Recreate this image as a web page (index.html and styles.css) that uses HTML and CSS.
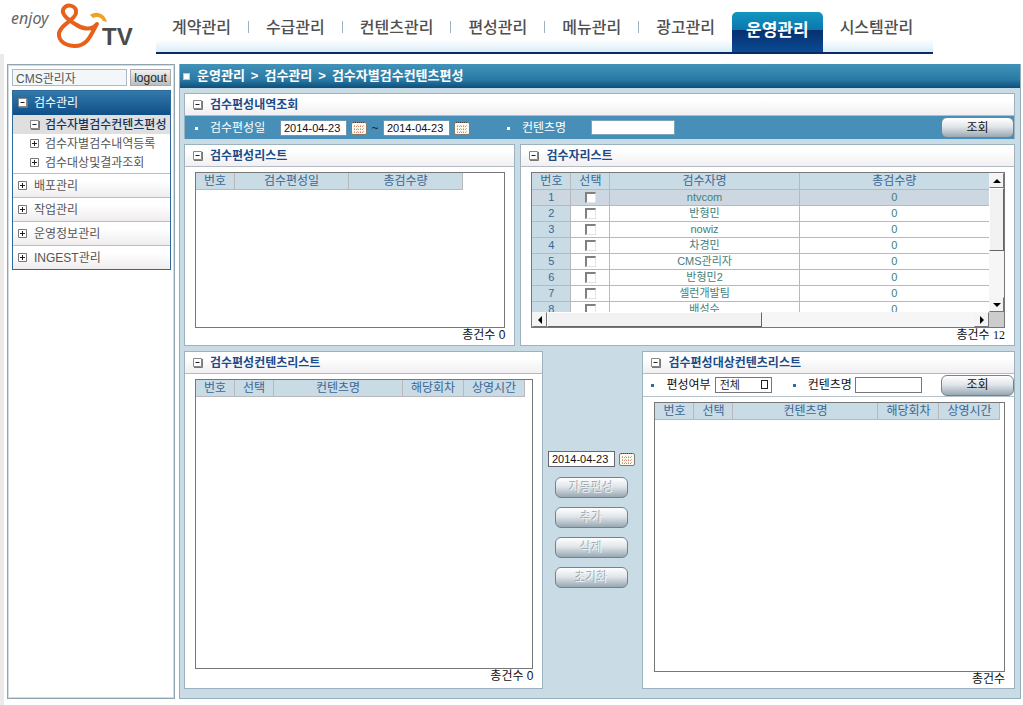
FILE: index.html
```html
<!DOCTYPE html>
<html lang="ko">
<head>
<meta charset="utf-8">
<meta name="viewport" content="width=device-width, initial-scale=1">
<title>검수자별검수컨텐츠편성</title>
<link rel="stylesheet" href="styles.css">
</head>
<body>
<svg class="defs" width="0" height="0" aria-hidden="true">
  <symbol id="i-minus" viewBox="0 0 10 10"><path d="M.5 .5h8v8h-8z" fill="#fff" stroke="#888"/><path d="M9.500 1v8.500H1" fill="none" stroke="#777"/><path d="M2.500 4.500h4" stroke="#222"/></symbol>
  <symbol id="i-plus" viewBox="0 0 10 10"><path d="M.5 .5h8v8h-8z" fill="#fff" stroke="#777"/><path d="M2 4.500h5M4.500 2v5" stroke="#222"/></symbol>
  <symbol id="i-cal" viewBox="0 0 16 14"><rect x=".5" y="1.500" width="15" height="12" rx="1.500" fill="#fdf8ef" stroke="#817b76"/><path d="M2 1.500h12" stroke="#444" stroke-dasharray="1 1"/><path d="M3 5.500h10M3 8.500h10M3 11.500h10" stroke="#d58a6c" stroke-dasharray="1 1"/><path d="M3 4.500h10M3 7.500h10M3 10.500h10" stroke="#b9c3a4" stroke-dasharray="1 2"/></symbol>
</svg>

<header class="top">
  <svg class="logo" viewBox="0 0 156 54" role="img" aria-label="enjoy &amp; TV">
    <text class="logo-enjoy" x="11" y="24">enjoy</text>
    <path d="M97 24C92 31 82 29 75 24C67 19 60 13 64 8C68 3 77 6 76 13C75 20 61 24 59 33C58 42 67 46 75 46C88 46 91 34 97 24Z" fill="none" stroke="#e8611c" stroke-width="4" stroke-linejoin="round"/>
    <path d="M90 15C97 10 105 14 107 22L103 21C101 17 97 16 93 18Z" fill="#f2a11f"/>
    <text class="logo-tv" x="102" y="45">TV</text>
  </svg>
  <nav class="gnb">
    <a href="#">계약관리</a><a href="#">수급관리</a><a href="#">컨텐츠관리</a><a href="#">편성관리</a><a href="#">메뉴관리</a><a href="#">광고관리</a><a href="#" class="on" aria-current="page">운영관리</a><a href="#">시스템관리</a>
  </nav>
</header>

<div class="page">
  <aside class="side">
    <form class="login">
      <input type="text" value="CMS관리자" aria-label="사용자" readonly>
      <button type="button">logout</button>
    </form>
    <nav class="menu">
      <a href="#" class="menu-head"><svg class="box"><use href="#i-minus"/></svg>검수관리</a>
      <div class="sub">
        <a href="#" class="cur"><svg class="box"><use href="#i-minus"/></svg>검수자별검수컨텐츠편성</a>
        <a href="#"><svg class="box"><use href="#i-plus"/></svg>검수자별검수내역등록</a>
        <a href="#"><svg class="box"><use href="#i-plus"/></svg>검수대상및결과조회</a>
      </div>
      <a href="#" class="item"><svg class="box"><use href="#i-plus"/></svg>배포관리</a>
      <a href="#" class="item"><svg class="box"><use href="#i-plus"/></svg>작업관리</a>
      <a href="#" class="item"><svg class="box"><use href="#i-plus"/></svg>운영정보관리</a>
      <a href="#" class="item"><svg class="box"><use href="#i-plus"/></svg>INGEST관리</a>
    </nav>
  </aside>

  <main class="main">
    <h1 class="crumb">운영관리<span class="sep">&gt;</span>검수관리<span class="sep">&gt;</span>검수자별검수컨텐츠편성</h1>
    <div class="work">
      <section class="panel search">
        <h2><svg class="box"><use href="#i-minus"/></svg>검수편성내역조회</h2>
        <form class="filter">
          <label for="from">검수편성일</label>
          <input id="from" class="date" type="text" value="2014-04-23">
          <button type="button" class="cal" aria-label="시작일 선택"><svg><use href="#i-cal"/></svg></button>
          <span class="tilde">~</span>
          <input class="date" type="text" value="2014-04-23" aria-label="종료일">
          <button type="button" class="cal" aria-label="종료일 선택"><svg><use href="#i-cal"/></svg></button>
          <label for="content" class="second">컨텐츠명</label>
          <input id="content" class="wide" type="text">
          <button type="button" class="btn">조회</button>
        </form>
      </section>

      <div class="row upper">
        <section class="panel">
          <h2><svg class="box"><use href="#i-minus"/></svg>검수편성리스트</h2>
          <div class="body">
            <div class="grid">
              <table class="fit">
                <thead><tr><th class="c-no">번호</th><th class="c-mid">검수편성일</th><th class="c-mid">총검수량</th></tr></thead>
              </table>
            </div>
            <p class="count">총건수 0</p>
          </div>
        </section>
        <section class="panel">
          <h2><svg class="box"><use href="#i-minus"/></svg>검수자리스트</h2>
          <div class="body">
            <div class="grid scroller">
              <div class="view">
                <table class="full">
                  <thead><tr><th class="c-no">번호</th><th class="c-no">선택</th><th>검수자명</th><th>총검수량</th></tr></thead>
                  <tbody>
                    <tr class="sel"><td class="no">1</td><td><input type="checkbox" aria-label="ntvcom"></td><td>ntvcom</td><td>0</td></tr>
                    <tr><td class="no">2</td><td><input type="checkbox" aria-label="반형민"></td><td>반형민</td><td>0</td></tr>
                    <tr><td class="no">3</td><td><input type="checkbox" aria-label="nowiz"></td><td>nowiz</td><td>0</td></tr>
                    <tr><td class="no">4</td><td><input type="checkbox" aria-label="차경민"></td><td>차경민</td><td>0</td></tr>
                    <tr><td class="no">5</td><td><input type="checkbox" aria-label="CMS관리자"></td><td>CMS관리자</td><td>0</td></tr>
                    <tr><td class="no">6</td><td><input type="checkbox" aria-label="반형민2"></td><td>반형민2</td><td>0</td></tr>
                    <tr><td class="no">7</td><td><input type="checkbox" aria-label="셀런개발팀"></td><td>셀런개발팀</td><td>0</td></tr>
                    <tr><td class="no">8</td><td><input type="checkbox" aria-label="배성수"></td><td>배성수</td><td>0</td></tr>
                  </tbody>
                </table>
              </div>
              <div class="vbar"><button type="button" aria-label="위로"><svg viewBox="0 0 8 8"><path d="M4 2l4 4H0z"/></svg></button><span class="thumb"></span><span class="track"></span><button type="button" aria-label="아래로"><svg viewBox="0 0 8 8"><path d="M4 6l4-4H0z"/></svg></button></div>
              <div class="hbar"><button type="button" aria-label="왼쪽"><svg viewBox="0 0 8 8"><path d="M2 4l4-4v8z"/></svg></button><span class="thumb"></span><span class="track"></span><button type="button" aria-label="오른쪽"><svg viewBox="0 0 8 8"><path d="M6 4L2 0v8z"/></svg></button></div>
              <span class="corner"></span>
            </div>
            <p class="count">총건수 <span class="num">12</span></p>
          </div>
        </section>
      </div>

      <div class="row lower">
        <section class="panel">
          <h2><svg class="box"><use href="#i-minus"/></svg>검수편성컨텐츠리스트</h2>
          <div class="body">
            <div class="grid">
              <table class="fit">
                <thead><tr><th class="c-no">번호</th><th class="c-no">선택</th><th class="c-name">컨텐츠명</th><th class="c-time">해당회차</th><th class="c-time">상영시간</th></tr></thead>
              </table>
            </div>
            <p class="count">총건수 0</p>
          </div>
        </section>
        <div class="actions">
          <div class="pick">
            <input class="date" type="text" value="2014-04-23" aria-label="편성일">
            <button type="button" class="cal" aria-label="편성일 선택"><svg><use href="#i-cal"/></svg></button>
          </div>
          <button type="button" class="btn" disabled>자동편성</button>
          <button type="button" class="btn" disabled>추가</button>
          <button type="button" class="btn" disabled>삭제</button>
          <button type="button" class="btn" disabled>초기화</button>
        </div>
        <section class="panel target">
          <h2><svg class="box"><use href="#i-minus"/></svg>검수편성대상컨텐츠리스트</h2>
          <form class="tools">
            <label for="state">편성여부</label>
            <span class="pickbox"><select id="state"><option>전체</option></select></span>
            <label for="target" class="second">컨텐츠명</label>
            <input id="target" type="text">
            <button type="button" class="btn">조회</button>
          </form>
          <div class="body">
            <div class="grid">
              <table class="fit">
                <thead><tr><th class="c-no">번호</th><th class="c-no">선택</th><th class="c-target">컨텐츠명</th><th class="c-time">해당회차</th><th class="c-time">상영시간</th></tr></thead>
              </table>
            </div>
            <p class="count">총건수</p>
          </div>
        </section>
      </div>
    </div>
  </main>
</div>
</body>
</html>
```
FILE: styles.css
```css
*, ::before, ::after { box-sizing: border-box; }

body {
  margin: 0;
  min-height: 100vh;
  display: flex;
  flex-direction: column;
  background: #fff;
  color: #111;
  font: 12px/16px "Liberation Sans", "Noto Sans CJK KR", sans-serif;
}

a { color: inherit; text-decoration: none; }
h1, h2, p { margin: 0; }
input, button, select { font: inherit; margin: 0; padding: 0; border-radius: 0; }
svg { display: block; flex: none; }
.defs { position: absolute; }
.box { width: 10px; height: 10px; }

/* Header */
.top { display: flex; height: 54px; }
.logo { width: 156px; height: 54px; }
.logo-enjoy { font: italic 16px "Noto Sans", sans-serif; fill: #666; }
.logo-tv { font: bold 24px "Liberation Sans", sans-serif; fill: #4a4a4a; }
.gnb {
  display: flex;
  align-items: center;
  padding-top: 3px;
  padding-right: 2px;
  border-bottom: 2px solid #0a2a66;
  background: linear-gradient(#fff 76%, #d9edf9);
}
.gnb a {
  position: relative;
  padding: 0 18px 0 17px;
  color: #505050;
  font-size: 16px;
  font-weight: 500;
  line-height: 24px;
  white-space: nowrap;
}
.gnb a:first-child { padding-left: 16px; }
.gnb a:nth-child(-n+6)::after {
  content: "";
  position: absolute;
  right: 0;
  top: 5px;
  width: 1px;
  height: 12px;
  background: #9fb0bf;
}
.gnb a:nth-child(6)::after { display: none; }
.gnb a:nth-child(6) { padding-right: 17px; }
.gnb .on {
  align-self: flex-end;
  padding: 0 14px;
  border-radius: 5px 5px 0 0;
  background: linear-gradient(#1495c0, #0b78ae 44%, #08306e 46%, #0a4a94);
  color: #fff;
  font-size: 17px;
  font-weight: bold;
  line-height: 38px;
  height: 40px;
}

/* Page frame */
.page {
  flex: 1;
  display: flex;
  gap: 4px;
  padding: 10px 2px 6px 3px;
  border-left: 4px solid #ece9e9;
}

.side { width: 168px; flex: none; padding: 4px 3px 4px 4px; border: 1px solid #8fa6b0; outline: 1px solid #d3dde0; outline-offset: -2px; }
.login { display: flex; gap: 3px; margin-bottom: 4px; }
.login input { flex: 1; min-width: 0; height: 17px; padding: 0 3px; border: 1px solid #a9bbc9; background: #f3f7fa; color: #555; }
.login button { width: 41px; height: 17px; border: 1px solid #aaa; background: linear-gradient(#f2f2f2, #bdbdbd); color: #222; line-height: 14px; }

.menu { border: 1px solid #2f6a9c; color: #555; }
.menu a { display: flex; align-items: center; white-space: nowrap; overflow: hidden; }
.menu .menu-head { gap: 6px; height: 24px; padding-left: 5px; background: linear-gradient(#3379ab, #0f4f88); color: #fff; }
.sub { padding-bottom: 1px; }
.sub a { gap: 5px; height: 19px; padding-left: 17px; }
.sub .cur { background: #dfdfe0; color: #14345c; font-weight: 500; }
.menu .item { gap: 6px; height: 24px; padding-left: 5px; border-top: 1px solid #bcbcbc; background: linear-gradient(#fff 30%, #efecee); }

.main { flex: 1; min-width: 0; display: flex; flex-direction: column; border: 1px solid #93afbc; border-top: 0; background: #c9dbe5; }
.crumb {
  display: flex;
  align-items: center;
  height: 24px;
  padding-left: 3px;
  background: linear-gradient(#4092b8, #2b7aa5 65%, #0c4f7a);
  color: #fff;
  font-size: 13px;
  font-weight: bold;
}
.crumb::before { content: ""; width: 7px; height: 7px; margin-right: 7px; border: 1px solid #a8cfe0; background: #fff; }
.sep { margin: 0 6px; }
.work { flex: 1; display: flex; flex-direction: column; gap: 5px; padding: 5px 5px 9px 4px; }

/* Panels */
.panel { display: flex; flex-direction: column; min-width: 0; border: 1px solid #9db2bf; background: #fff; }
.panel h2 {
  display: flex;
  align-items: center;
  gap: 7px;
  height: 22px;
  padding-left: 8px;
  border-bottom: 1px solid #b4bcc2;
  background: linear-gradient(#fff 30%, #f1eff1);
  color: #1c4b88;
  font-size: 12px;
  font-weight: bold;
}
.body { flex: 1; display: flex; flex-direction: column; padding: 5px 9px 3px 10px; }
.grid { flex: 1; border: 1px solid #777; background: #fff; }
.count { line-height: 14px; text-align: right; }
.num { font-family: "Liberation Serif", "Noto Sans CJK KR", serif; }
.row { display: grid; gap: 5px; }
.upper { grid-template-columns: 331fr 494fr; }
.lower { flex: 1; grid-template-columns: 359fr 99px 372fr; gap: 0; }
.lower .body { padding-bottom: 5px; }
.lower .target .body { padding: 5px 9px 2px 11px; }

/* Search bar */
.search { border-bottom: 0; }
.filter { display: flex; align-items: center; height: 23px; padding-left: 10px; background: #478fb8; color: #fff; }
.filter label::before, .tools label::before {
  content: "";
  display: inline-block;
  width: 3px;
  height: 3px;
  margin-right: 12px;
  vertical-align: middle;
  background: currentColor;
}
.filter label { width: 85px; }
.filter .second { width: 84px; margin-left: 37px; }
.date { width: 67px; height: 16px; padding: 0 3px; border: 1px solid #667; background: #fff; color: #111; font-size: 11px; }
.filter .date { border-color: #6d98b0; }
.cal { width: 16px; height: 14px; margin-left: 4px; border: 0; background: none; }
.cal svg { width: 16px; height: 14px; }
.tilde { width: 16px; color: #123; text-align: center; }
.wide { width: 84px; height: 15px; border: 1px solid #7ba5bb; background: #fff; }
.btn {
  width: 73px;
  height: 21px;
  border: 1px solid #6f8492;
  border-radius: 6px;
  background: linear-gradient(#fff, #e1e6ea 45%, #98a8b3);
  color: #111;
  line-height: 18px;
}
.filter .btn, .tools .btn { margin-left: auto; }

/* Tables */
table { border-collapse: separate; border-spacing: 0; table-layout: fixed; }
.fit { width: min-content; }
.full { width: 100%; }
th, td { height: 16px; padding: 0; border-right: 1px solid #b9b9bb; border-bottom: 1px solid #b9b9bb; line-height: 15px; text-align: center; overflow: hidden; white-space: nowrap; }
th { height: 17px; background: #c9dbe5; color: #3a6794; font-weight: normal; line-height: 16px; }
td { color: #44807a; font-size: 11px; }
.full th:last-child, .full td:last-child { border-right: 0; }
td.no { background: #c9dbe5; color: #3a6794; }
.sel td { background: #ccd7e1; }
.c-no { width: 39px; }
.c-mid { width: 114px; }
.c-name { width: 129px; }
.c-target { width: 145px; }
.c-time { width: 61px; }
td input { appearance: none; display: block; width: 11px; height: 11px; margin: 0 auto; border: 1px solid #e3e3e3; border-top: 2px solid #808080; border-left: 2px solid #808080; background: #fff; }

/* Scrollable grid */
.scroller { flex: none; display: grid; grid-template-columns: 1fr 15px; grid-template-rows: 139px 15px; }
.view { overflow: hidden; }
.vbar, .hbar { display: flex; background: #f6f6f6; }
.vbar { flex-direction: column; }
.vbar button, .hbar button { display: grid; place-items: center; width: 15px; height: 15px; border: 1px solid #f5f5f5; border-right-color: #777; border-bottom-color: #777; background: #f4f4f4; }
.vbar svg, .hbar svg { width: 8px; height: 8px; }
.thumb { background: #f2f2f2; border: 1px solid #fff; border-right-color: #666; border-bottom-color: #666; }
.vbar .thumb { height: 63px; }
.hbar .thumb { width: 47%; }
.track { flex: 1; }
.corner { background: #ccc; }

/* Transfer controls */
.actions { display: flex; flex-direction: column; align-items: center; gap: 9px; padding: 100px 3px 0 0; }
.pick { display: flex; align-items: center; }
.actions .btn { color: #eef2f4; text-shadow: -1px -1px 0 #98a4ac; }
.actions .btn:first-of-type { margin-top: 1px; }

.tools { display: flex; align-items: center; height: 23px; padding-left: 8px; border-bottom: 1px solid #b4c3cc; }
.tools label { white-space: nowrap; }
.tools label::before { width: 3px; color: #2b6ca5; margin-right: 12px; }
.tools .second { margin-left: 21px; }
.tools input { width: 67px; height: 16px; margin-left: 3px; border: 1px solid #777; background: #fff; }
.pickbox { position: relative; margin-left: 4px; }
.pickbox::after { content: ""; position: absolute; right: 4px; top: 3px; width: 7px; height: 9px; border: 1px solid #222; pointer-events: none; }
.pickbox select { display: block; appearance: none; width: 57px; height: 16px; padding: 0 4px; border: 1px solid #777; background: #fff; color: #222; font-size: 11px; line-height: 14px; }
```
